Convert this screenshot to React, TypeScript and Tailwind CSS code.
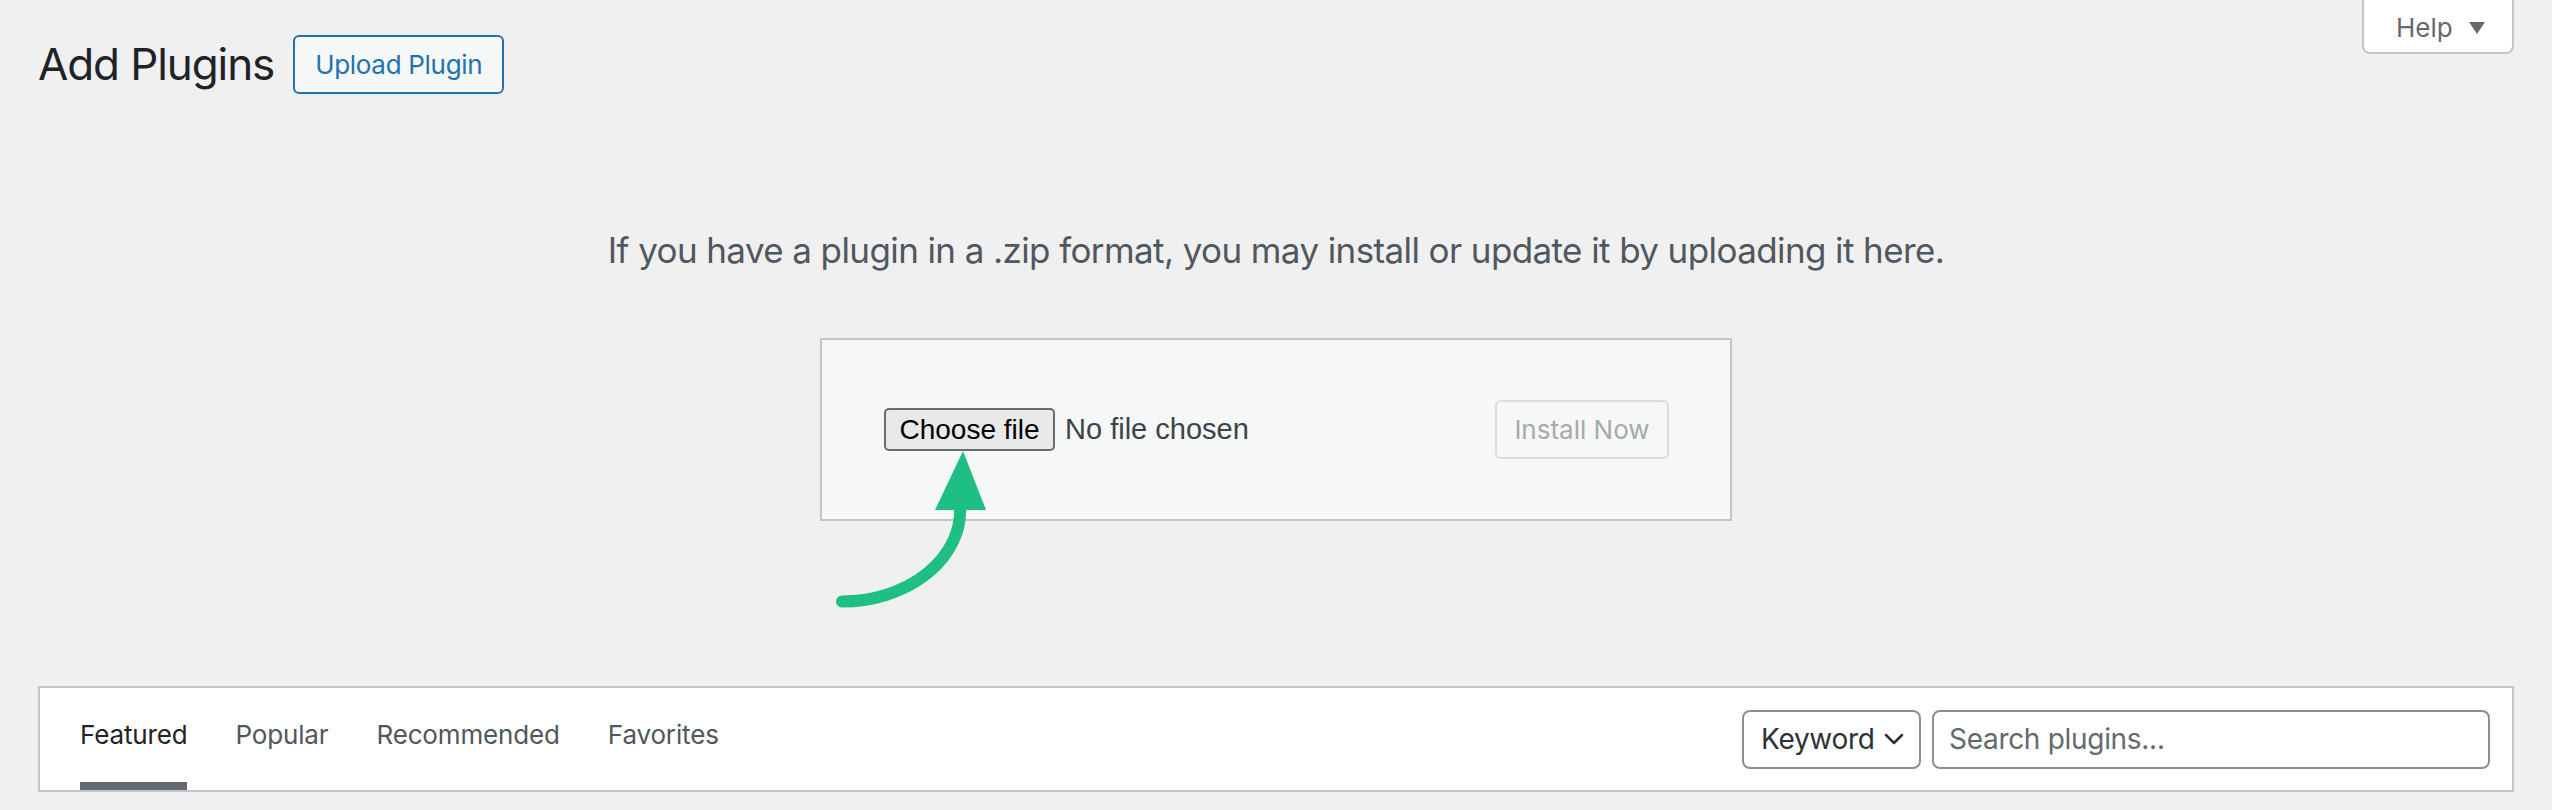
import React from "react";

const tabs = ["Featured", "Popular", "Recommended", "Favorites"];

export default function App() {
  return (
    <div className="relative min-h-[810px] w-full bg-[#f0f0f1] pl-[38px] pr-[38px] font-[family-name:Inter,sans-serif] text-[#3c434a]">
      {/* header row */}
      <div className="flex items-start justify-between">
        <div className="mt-[34px] flex items-center">
          <h1 className="text-[44px] leading-[60px] font-normal text-[#1d2327] tracking-[-1.1px]">Add Plugins</h1>
          <button className="ml-[19px] h-[59px] rounded-[6px] border-2 border-[#2271b1] bg-[#f6f7f7] px-[20px] text-[26px] tracking-[-0.3px] text-[#2271b1]">
            Upload Plugin
          </button>
        </div>
        <div className="flex h-[54px] w-[152px] items-center gap-[16px] rounded-b-[8px] border-x-2 border-b-2 border-[#c3c4c7] bg-white pl-[32px] pt-[2px]">
          <span className="text-[26px] text-[#646970]">Help</span>
          <svg width="16" height="12" viewBox="0 0 16 12" className="mt-[1px]">
            <path d="M0 0 H16 L8 12 Z" fill="#646970" />
          </svg>
        </div>
      </div>

      {/* description */}
      <p className="mt-[129px] text-center text-[35px] leading-[54px] text-[#50575e] tracking-[-0.6px]">
        If you have a plugin in a .zip format, you may install or update it by uploading it here.
      </p>

      {/* upload box */}
      <div className="mx-auto mt-[61px] flex h-[183px] w-[912px] items-center justify-between border-2 border-[#c3c4c7] bg-[#f6f7f7] pl-[62px] pr-[61px]">
        <div className="flex items-center font-[family-name:'Liberation_Sans',Arial,sans-serif]">
          <button className="h-[43px] w-[171px] rounded-[5px] border-2 border-[#6b6b6b] bg-[#e9e9e9] text-[28px] leading-none text-black">
            Choose file
          </button>
          <span className="ml-[10px] text-[29px] text-[#3c434a]">No file chosen</span>
        </div>
        <button className="h-[59px] w-[174px] rounded-[6px] border-2 border-[#dcdcde] bg-[#f6f7f7] text-[26px] text-[#a7aaad]">
          Install Now
        </button>
      </div>

      {/* annotation arrow */}
      <svg
        className="pointer-events-none absolute left-0 top-0"
        width="1100"
        height="650"
        viewBox="0 0 1100 650"
      >
        <path
          d="M842 601.5 A118 91.5 0 0 0 960 505"
          fill="none"
          stroke="#1dbf82"
          strokeWidth="12"
          strokeLinecap="round"
        />
        <path d="M963 451 L986 510 L935 510 Z" fill="#1dbf82" />
      </svg>

      {/* filter bar */}
      <div className="mt-[165px] flex h-[106px] items-stretch justify-between border-2 border-[#c3c4c7] bg-white pl-[40px] pr-[22px]">
        <div className="flex items-stretch gap-[48px]">
          {tabs.map((t, i) => (
            <div
              key={t}
              className={
                i === 0
                  ? "flex items-center border-b-[8px] border-[#646970] text-[26px] leading-[36px] tracking-[-0.15px] text-[#1d2327]"
                  : "flex items-center border-b-[8px] border-transparent text-[26px] leading-[36px] tracking-[-0.15px] text-[#50575e]"
              }
            >
              {t}
            </div>
          ))}
        </div>
        <div className="flex items-center gap-[11px]">
          <div className="flex h-[59px] w-[179px] items-center justify-between rounded-[8px] border-2 border-[#8c8f94] bg-white pl-[17px] pr-[15px]">
            <span className="text-[28px] tracking-[-0.3px] text-[#2c3338]">Keyword</span>
            <svg width="20" height="12" viewBox="0 0 20 12">
              <path d="M2 2 L10 10 L18 2" fill="none" stroke="#2c3338" strokeWidth="2.5" strokeLinecap="round" strokeLinejoin="round" />
            </svg>
          </div>
          <div className="flex h-[59px] w-[558px] items-center rounded-[8px] border-2 border-[#8c8f94] bg-white pl-[15px]">
            <span className="text-[28px] tracking-[-0.3px] text-[#646970]">Search plugins...</span>
          </div>
        </div>
      </div>
    </div>
  );
}
